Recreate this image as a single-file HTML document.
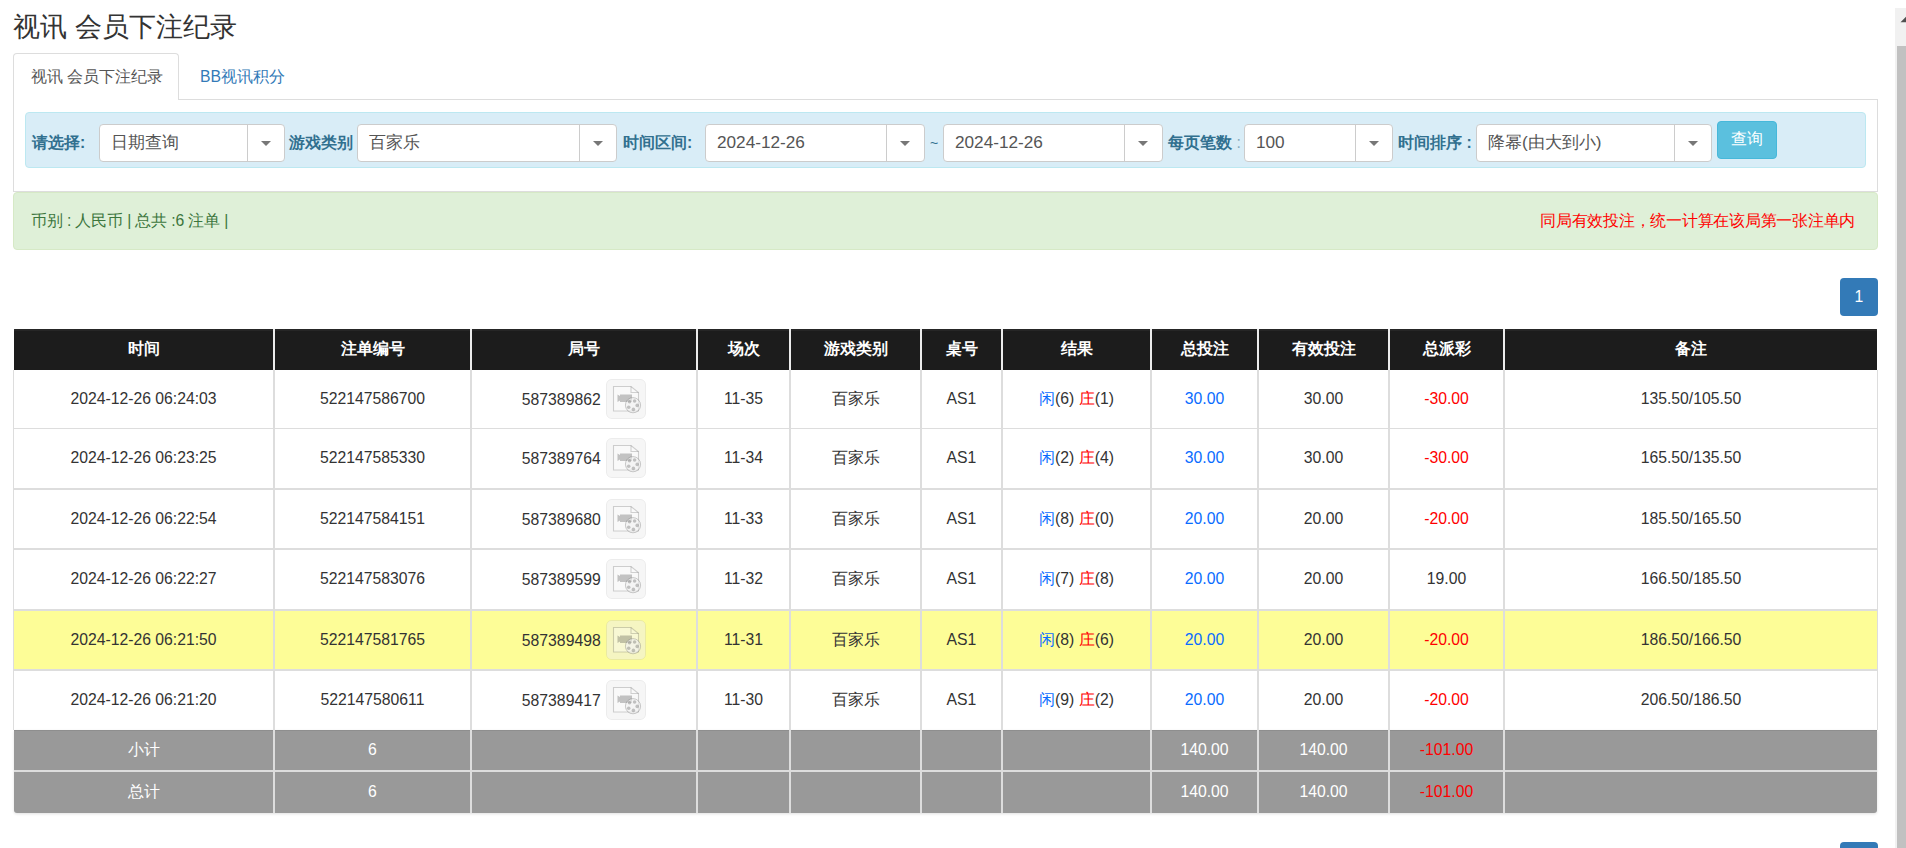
<!DOCTYPE html>
<html><head><meta charset="utf-8">
<style>
*{box-sizing:border-box}
html,body{margin:0;padding:0;background:#fff;width:1906px;height:848px;overflow:hidden;font-family:"Liberation Sans",sans-serif;color:#333;position:relative}
.abs{position:absolute}
#title{left:13px;top:7px;font-size:27px;line-height:40px;color:#333;white-space:nowrap}
#tab1{left:13px;top:53px;width:166px;height:47px;border:1px solid #ddd;border-bottom:none;border-radius:4px 4px 0 0;background:#fff;font-size:15.75px;color:#555;line-height:45px;padding-left:17px;white-space:nowrap;z-index:2}
#tab2{left:200px;top:53px;font-size:15.75px;color:#337ab7;line-height:47px;white-space:nowrap}
#tabc{left:13px;top:99px;width:1865px;height:93px;border:1px solid #ddd}
#bar{left:25px;top:112px;width:1841px;height:56px;background:#d9edf7;border:1px solid #bce8f1;border-radius:4px}
.lbl{position:absolute;top:124px;height:37px;line-height:37px;font-size:15.75px;font-weight:bold;color:#31708f;white-space:nowrap}
.sel{position:absolute;top:124px;height:38px;background:#fff;border:1px solid #ccc;border-radius:4px;font-size:17.2px;color:#555;line-height:34px;padding-left:11px;white-space:nowrap}
.sel .dv{position:absolute;top:0;bottom:0;width:1px;background:#ccc}
.sel .ct{position:absolute;top:16px;width:0;height:0;border-left:5px solid transparent;border-right:5px solid transparent;border-top:5px solid #777}
#btn{left:1717px;top:121px;width:60px;height:38px;background:#5bc0de;border:1px solid #46b8da;border-radius:4px;color:#fff;font-size:15.75px;line-height:34px;text-align:center}
#alert{left:13px;top:192px;width:1865px;height:58px;background:#dff0d8;border:1px solid #d6e9c6;border-radius:4px;font-size:15.75px;color:#3c763d}
#alert .l{position:absolute;left:17px;top:0;line-height:56px;letter-spacing:-0.15px}
#alert .r{position:absolute;right:22px;top:0;line-height:56px;color:#f00;letter-spacing:-0.25px}
.pg{width:38px;height:38px;background:#337ab7;border-radius:4px;color:#fff;font-size:15.75px;line-height:38px;text-align:center}
#tbl{position:absolute;left:13px;top:328px;border-collapse:collapse;table-layout:fixed;font-size:15.75px;color:#333}
#tbl th{background:#1b1b1b;color:#fff;font-weight:bold;height:42px;border-left:2px solid #ddd;border-right:2px solid #ddd;padding:0;text-align:center}
#tbl td{border:1px solid #ddd;border-left:2px solid #ddd;border-right:2px solid #ddd;padding:0;text-align:center;height:60px}
#tbl tr.y td{background:#ffff99}
#tbl tr.g td{background:#999;color:#fff;height:42px}
.bl{color:#1a6ae0}.rd{color:#f00}
.ic{display:inline-block;width:40px;height:40px;vertical-align:middle;margin-left:4px;border:1px solid #eee;border-radius:6px;background:#f8f8f8}
#sb{left:1895px;top:8px;width:11px;height:840px;background:#f1f1f1}
#sbt{left:1897px;top:46px;width:9px;height:802px;background:#c1c1c1}

.r{position:absolute}
.c{position:absolute;text-align:center;font-size:15.75px;color:#333;white-space:nowrap}
.c.h{color:#fff;font-weight:bold}
.c.w{color:#fff}
.c.bl,.c .bl{color:#0a6cff}
.c.rd,.c .rd{color:#f00}
.c.h{line-height:40px !important}
.c.ju .jn{vertical-align:middle}
.c.ju svg{vertical-align:middle;margin-left:5.5px;position:relative;top:-1px}
</style></head><body>
<div id="title" class="abs">视讯 会员下注纪录</div>
<div id="tabc" class="abs"></div>
<div id="tab1" class="abs">视讯 会员下注纪录</div>
<div id="tab2" class="abs">BB视讯积分</div>
<div id="bar" class="abs"></div>

<div class="lbl" style="left:32px">请选择:</div>
<div class="sel" style="left:99px;width:186px">日期查询<span class="dv" style="left:147px"></span><span class="ct" style="left:161px"></span></div>
<div class="lbl" style="left:289px">游戏类别</div>
<div class="sel" style="left:357px;width:260px">百家乐<span class="dv" style="left:221px"></span><span class="ct" style="left:235px"></span></div>
<div class="lbl" style="left:623px">时间区间:</div>
<div class="sel" style="left:705px;width:220px">2024-12-26<span class="dv" style="left:180px"></span><span class="ct" style="left:194px"></span></div>
<div class="abs" style="left:930px;top:125px;line-height:37px;font-size:14px;color:#31708f">~</div>
<div class="sel" style="left:943px;width:220px">2024-12-26<span class="dv" style="left:180px"></span><span class="ct" style="left:194px"></span></div>
<div class="lbl" style="left:1168px">每页笔数 <span style="font-weight:normal;color:#8ab">:</span></div>
<div class="sel" style="left:1244px;width:149px">100<span class="dv" style="left:110px"></span><span class="ct" style="left:124px"></span></div>
<div class="lbl" style="left:1398px">时间排序 :</div>
<div class="sel" style="left:1476px;width:236px">降幂(由大到小)<span class="dv" style="left:197px"></span><span class="ct" style="left:211px"></span></div>
<div id="btn" class="abs">查询</div>

<div id="alert" class="abs"><span class="l">币别 : 人民币 | 总共 :6 注单 |</span><span class="r">同局有效投注，统一计算在该局第一张注单内</span></div>

<div class="pg abs" style="left:1840px;top:278px">1</div>

<div id="tb">
<div class="r" style="left:14px;top:329px;width:1863px;height:41px;background:#1c1c1c;border-radius:1px 1px 0 0;box-shadow:inset 0 2px 0 #262626"></div>
<div class="r" style="left:14px;top:611px;width:1863px;height:58px;background:#fdfd97"></div>
<div class="r" style="left:14px;top:730px;width:1863px;height:83px;background:#999;border-radius:0 0 3px 3px;box-shadow:0 1px 3px rgba(0,0,0,0.12)"></div>
<div class="r" style="left:14px;top:730px;width:1863px;height:1px;background:#8e8e8e"></div>
<div class="r" style="left:14px;top:428px;width:1863px;height:1px;background:#ddd"></div>
<div class="r" style="left:14px;top:488px;width:1863px;height:2px;background:#ddd"></div>
<div class="r" style="left:14px;top:548px;width:1863px;height:2px;background:#ddd"></div>
<div class="r" style="left:14px;top:609px;width:1863px;height:2px;background:#ddd"></div>
<div class="r" style="left:14px;top:669px;width:1863px;height:2px;background:#ddd"></div>
<div class="r" style="left:14px;top:770px;width:1863px;height:2px;background:#ddd"></div>
<div class="r" style="left:13px;top:370px;width:1px;height:360px;background:#ddd"></div>
<div class="r" style="left:1877px;top:370px;width:1px;height:360px;background:#ddd"></div>
<div class="r" style="left:273px;top:329px;width:2px;height:41px;background:#ececec"></div>
<div class="r" style="left:273px;top:370px;width:2px;height:443px;background:#ddd"></div>
<div class="r" style="left:470px;top:329px;width:2px;height:41px;background:#ececec"></div>
<div class="r" style="left:470px;top:370px;width:2px;height:443px;background:#ddd"></div>
<div class="r" style="left:696px;top:329px;width:2px;height:41px;background:#ececec"></div>
<div class="r" style="left:696px;top:370px;width:2px;height:443px;background:#ddd"></div>
<div class="r" style="left:789px;top:329px;width:2px;height:41px;background:#ececec"></div>
<div class="r" style="left:789px;top:370px;width:2px;height:443px;background:#ddd"></div>
<div class="r" style="left:920px;top:329px;width:2px;height:41px;background:#ececec"></div>
<div class="r" style="left:920px;top:370px;width:2px;height:443px;background:#ddd"></div>
<div class="r" style="left:1001px;top:329px;width:2px;height:41px;background:#ececec"></div>
<div class="r" style="left:1001px;top:370px;width:2px;height:443px;background:#ddd"></div>
<div class="r" style="left:1150px;top:329px;width:2px;height:41px;background:#ececec"></div>
<div class="r" style="left:1150px;top:370px;width:2px;height:443px;background:#ddd"></div>
<div class="r" style="left:1257px;top:329px;width:2px;height:41px;background:#ececec"></div>
<div class="r" style="left:1257px;top:370px;width:2px;height:443px;background:#ddd"></div>
<div class="r" style="left:1388px;top:329px;width:2px;height:41px;background:#ececec"></div>
<div class="r" style="left:1388px;top:370px;width:2px;height:443px;background:#ddd"></div>
<div class="r" style="left:1503px;top:329px;width:2px;height:41px;background:#ececec"></div>
<div class="r" style="left:1503px;top:370px;width:2px;height:443px;background:#ddd"></div>
<div class="c h" style="left:14px;top:329px;width:259px;height:41px;line-height:41px">时间</div>
<div class="c h" style="left:275px;top:329px;width:195px;height:41px;line-height:41px">注单编号</div>
<div class="c h" style="left:472px;top:329px;width:224px;height:41px;line-height:41px">局号</div>
<div class="c h" style="left:698px;top:329px;width:91px;height:41px;line-height:41px">场次</div>
<div class="c h" style="left:791px;top:329px;width:129px;height:41px;line-height:41px">游戏类别</div>
<div class="c h" style="left:922px;top:329px;width:79px;height:41px;line-height:41px">桌号</div>
<div class="c h" style="left:1003px;top:329px;width:147px;height:41px;line-height:41px">结果</div>
<div class="c h" style="left:1152px;top:329px;width:105px;height:41px;line-height:41px">总投注</div>
<div class="c h" style="left:1259px;top:329px;width:129px;height:41px;line-height:41px">有效投注</div>
<div class="c h" style="left:1390px;top:329px;width:113px;height:41px;line-height:41px">总派彩</div>
<div class="c h" style="left:1505px;top:329px;width:372px;height:41px;line-height:41px">备注</div>
<div class="c " style="left:14px;top:370px;width:259px;height:58px;line-height:58px">2024-12-26 06:24:03</div>
<div class="c " style="left:275px;top:370px;width:195px;height:58px;line-height:58px">522147586700</div>
<div class="c ju" style="left:472px;top:370px;width:224px;height:58px;line-height:58px"><span class="jn">587389862</span><svg width="40" height="40" viewBox="0 0 40 40"><rect x="0.5" y="0.5" width="39" height="39" rx="5" fill="rgba(238,238,238,0.5)" stroke="rgba(0,0,0,0.055)"/><path d="M7.5 7.5H25L32.5 13.5V32H7.5Z" fill="rgba(255,255,255,0.3)" stroke="rgba(0,0,0,0.17)" stroke-width="1.1"/><path d="M25 7.5V13.5H32.5" fill="none" stroke="rgba(0,0,0,0.17)" stroke-width="1.1"/><path d="M11.5 15.5L14 17V15.5H26V23H14V21.5L11.5 23Z" fill="rgba(0,0,0,0.22)"/><circle cx="27" cy="26.2" r="7.6" fill="rgba(240,240,240,0.6)" stroke="rgba(0,0,0,0.19)" stroke-width="1"/><g fill="rgba(0,0,0,0.21)"><circle cx="23.5" cy="22.8" r="1.8"/><circle cx="28.6" cy="22" r="1.8"/><circle cx="31.2" cy="26.4" r="1.8"/><circle cx="27.4" cy="30.4" r="1.8"/><circle cx="22.7" cy="28.2" r="1.8"/></g></svg></div>
<div class="c " style="left:698px;top:370px;width:91px;height:58px;line-height:58px">11-35</div>
<div class="c " style="left:791px;top:370px;width:129px;height:58px;line-height:58px">百家乐</div>
<div class="c " style="left:922px;top:370px;width:79px;height:58px;line-height:58px">AS1</div>
<div class="c " style="left:1003px;top:370px;width:147px;height:58px;line-height:58px"><span class="bl">闲</span>(6) <span class="rd">庄</span>(1)</div>
<div class="c bl" style="left:1152px;top:370px;width:105px;height:58px;line-height:58px">30.00</div>
<div class="c " style="left:1259px;top:370px;width:129px;height:58px;line-height:58px">30.00</div>
<div class="c rd" style="left:1390px;top:370px;width:113px;height:58px;line-height:58px">-30.00</div>
<div class="c " style="left:1505px;top:370px;width:372px;height:58px;line-height:58px">135.50/105.50</div>
<div class="c " style="left:14px;top:429px;width:259px;height:58px;line-height:58px">2024-12-26 06:23:25</div>
<div class="c " style="left:275px;top:429px;width:195px;height:58px;line-height:58px">522147585330</div>
<div class="c ju" style="left:472px;top:429px;width:224px;height:58px;line-height:58px"><span class="jn">587389764</span><svg width="40" height="40" viewBox="0 0 40 40"><rect x="0.5" y="0.5" width="39" height="39" rx="5" fill="rgba(238,238,238,0.5)" stroke="rgba(0,0,0,0.055)"/><path d="M7.5 7.5H25L32.5 13.5V32H7.5Z" fill="rgba(255,255,255,0.3)" stroke="rgba(0,0,0,0.17)" stroke-width="1.1"/><path d="M25 7.5V13.5H32.5" fill="none" stroke="rgba(0,0,0,0.17)" stroke-width="1.1"/><path d="M11.5 15.5L14 17V15.5H26V23H14V21.5L11.5 23Z" fill="rgba(0,0,0,0.22)"/><circle cx="27" cy="26.2" r="7.6" fill="rgba(240,240,240,0.6)" stroke="rgba(0,0,0,0.19)" stroke-width="1"/><g fill="rgba(0,0,0,0.21)"><circle cx="23.5" cy="22.8" r="1.8"/><circle cx="28.6" cy="22" r="1.8"/><circle cx="31.2" cy="26.4" r="1.8"/><circle cx="27.4" cy="30.4" r="1.8"/><circle cx="22.7" cy="28.2" r="1.8"/></g></svg></div>
<div class="c " style="left:698px;top:429px;width:91px;height:58px;line-height:58px">11-34</div>
<div class="c " style="left:791px;top:429px;width:129px;height:58px;line-height:58px">百家乐</div>
<div class="c " style="left:922px;top:429px;width:79px;height:58px;line-height:58px">AS1</div>
<div class="c " style="left:1003px;top:429px;width:147px;height:58px;line-height:58px"><span class="bl">闲</span>(2) <span class="rd">庄</span>(4)</div>
<div class="c bl" style="left:1152px;top:429px;width:105px;height:58px;line-height:58px">30.00</div>
<div class="c " style="left:1259px;top:429px;width:129px;height:58px;line-height:58px">30.00</div>
<div class="c rd" style="left:1390px;top:429px;width:113px;height:58px;line-height:58px">-30.00</div>
<div class="c " style="left:1505px;top:429px;width:372px;height:58px;line-height:58px">165.50/135.50</div>
<div class="c " style="left:14px;top:490px;width:259px;height:58px;line-height:58px">2024-12-26 06:22:54</div>
<div class="c " style="left:275px;top:490px;width:195px;height:58px;line-height:58px">522147584151</div>
<div class="c ju" style="left:472px;top:490px;width:224px;height:58px;line-height:58px"><span class="jn">587389680</span><svg width="40" height="40" viewBox="0 0 40 40"><rect x="0.5" y="0.5" width="39" height="39" rx="5" fill="rgba(238,238,238,0.5)" stroke="rgba(0,0,0,0.055)"/><path d="M7.5 7.5H25L32.5 13.5V32H7.5Z" fill="rgba(255,255,255,0.3)" stroke="rgba(0,0,0,0.17)" stroke-width="1.1"/><path d="M25 7.5V13.5H32.5" fill="none" stroke="rgba(0,0,0,0.17)" stroke-width="1.1"/><path d="M11.5 15.5L14 17V15.5H26V23H14V21.5L11.5 23Z" fill="rgba(0,0,0,0.22)"/><circle cx="27" cy="26.2" r="7.6" fill="rgba(240,240,240,0.6)" stroke="rgba(0,0,0,0.19)" stroke-width="1"/><g fill="rgba(0,0,0,0.21)"><circle cx="23.5" cy="22.8" r="1.8"/><circle cx="28.6" cy="22" r="1.8"/><circle cx="31.2" cy="26.4" r="1.8"/><circle cx="27.4" cy="30.4" r="1.8"/><circle cx="22.7" cy="28.2" r="1.8"/></g></svg></div>
<div class="c " style="left:698px;top:490px;width:91px;height:58px;line-height:58px">11-33</div>
<div class="c " style="left:791px;top:490px;width:129px;height:58px;line-height:58px">百家乐</div>
<div class="c " style="left:922px;top:490px;width:79px;height:58px;line-height:58px">AS1</div>
<div class="c " style="left:1003px;top:490px;width:147px;height:58px;line-height:58px"><span class="bl">闲</span>(8) <span class="rd">庄</span>(0)</div>
<div class="c bl" style="left:1152px;top:490px;width:105px;height:58px;line-height:58px">20.00</div>
<div class="c " style="left:1259px;top:490px;width:129px;height:58px;line-height:58px">20.00</div>
<div class="c rd" style="left:1390px;top:490px;width:113px;height:58px;line-height:58px">-20.00</div>
<div class="c " style="left:1505px;top:490px;width:372px;height:58px;line-height:58px">185.50/165.50</div>
<div class="c " style="left:14px;top:550px;width:259px;height:58px;line-height:58px">2024-12-26 06:22:27</div>
<div class="c " style="left:275px;top:550px;width:195px;height:58px;line-height:58px">522147583076</div>
<div class="c ju" style="left:472px;top:550px;width:224px;height:58px;line-height:58px"><span class="jn">587389599</span><svg width="40" height="40" viewBox="0 0 40 40"><rect x="0.5" y="0.5" width="39" height="39" rx="5" fill="rgba(238,238,238,0.5)" stroke="rgba(0,0,0,0.055)"/><path d="M7.5 7.5H25L32.5 13.5V32H7.5Z" fill="rgba(255,255,255,0.3)" stroke="rgba(0,0,0,0.17)" stroke-width="1.1"/><path d="M25 7.5V13.5H32.5" fill="none" stroke="rgba(0,0,0,0.17)" stroke-width="1.1"/><path d="M11.5 15.5L14 17V15.5H26V23H14V21.5L11.5 23Z" fill="rgba(0,0,0,0.22)"/><circle cx="27" cy="26.2" r="7.6" fill="rgba(240,240,240,0.6)" stroke="rgba(0,0,0,0.19)" stroke-width="1"/><g fill="rgba(0,0,0,0.21)"><circle cx="23.5" cy="22.8" r="1.8"/><circle cx="28.6" cy="22" r="1.8"/><circle cx="31.2" cy="26.4" r="1.8"/><circle cx="27.4" cy="30.4" r="1.8"/><circle cx="22.7" cy="28.2" r="1.8"/></g></svg></div>
<div class="c " style="left:698px;top:550px;width:91px;height:58px;line-height:58px">11-32</div>
<div class="c " style="left:791px;top:550px;width:129px;height:58px;line-height:58px">百家乐</div>
<div class="c " style="left:922px;top:550px;width:79px;height:58px;line-height:58px">AS1</div>
<div class="c " style="left:1003px;top:550px;width:147px;height:58px;line-height:58px"><span class="bl">闲</span>(7) <span class="rd">庄</span>(8)</div>
<div class="c bl" style="left:1152px;top:550px;width:105px;height:58px;line-height:58px">20.00</div>
<div class="c " style="left:1259px;top:550px;width:129px;height:58px;line-height:58px">20.00</div>
<div class="c " style="left:1390px;top:550px;width:113px;height:58px;line-height:58px">19.00</div>
<div class="c " style="left:1505px;top:550px;width:372px;height:58px;line-height:58px">166.50/185.50</div>
<div class="c " style="left:14px;top:611px;width:259px;height:58px;line-height:58px">2024-12-26 06:21:50</div>
<div class="c " style="left:275px;top:611px;width:195px;height:58px;line-height:58px">522147581765</div>
<div class="c ju" style="left:472px;top:611px;width:224px;height:58px;line-height:58px"><span class="jn">587389498</span><svg width="40" height="40" viewBox="0 0 40 40"><rect x="0.5" y="0.5" width="39" height="39" rx="5" fill="rgba(238,238,238,0.5)" stroke="rgba(0,0,0,0.055)"/><path d="M7.5 7.5H25L32.5 13.5V32H7.5Z" fill="rgba(255,255,255,0.3)" stroke="rgba(0,0,0,0.17)" stroke-width="1.1"/><path d="M25 7.5V13.5H32.5" fill="none" stroke="rgba(0,0,0,0.17)" stroke-width="1.1"/><path d="M11.5 15.5L14 17V15.5H26V23H14V21.5L11.5 23Z" fill="rgba(0,0,0,0.22)"/><circle cx="27" cy="26.2" r="7.6" fill="rgba(240,240,240,0.6)" stroke="rgba(0,0,0,0.19)" stroke-width="1"/><g fill="rgba(0,0,0,0.21)"><circle cx="23.5" cy="22.8" r="1.8"/><circle cx="28.6" cy="22" r="1.8"/><circle cx="31.2" cy="26.4" r="1.8"/><circle cx="27.4" cy="30.4" r="1.8"/><circle cx="22.7" cy="28.2" r="1.8"/></g></svg></div>
<div class="c " style="left:698px;top:611px;width:91px;height:58px;line-height:58px">11-31</div>
<div class="c " style="left:791px;top:611px;width:129px;height:58px;line-height:58px">百家乐</div>
<div class="c " style="left:922px;top:611px;width:79px;height:58px;line-height:58px">AS1</div>
<div class="c " style="left:1003px;top:611px;width:147px;height:58px;line-height:58px"><span class="bl">闲</span>(8) <span class="rd">庄</span>(6)</div>
<div class="c bl" style="left:1152px;top:611px;width:105px;height:58px;line-height:58px">20.00</div>
<div class="c " style="left:1259px;top:611px;width:129px;height:58px;line-height:58px">20.00</div>
<div class="c rd" style="left:1390px;top:611px;width:113px;height:58px;line-height:58px">-20.00</div>
<div class="c " style="left:1505px;top:611px;width:372px;height:58px;line-height:58px">186.50/166.50</div>
<div class="c " style="left:14px;top:671px;width:259px;height:58px;line-height:58px">2024-12-26 06:21:20</div>
<div class="c " style="left:275px;top:671px;width:195px;height:58px;line-height:58px">522147580611</div>
<div class="c ju" style="left:472px;top:671px;width:224px;height:58px;line-height:58px"><span class="jn">587389417</span><svg width="40" height="40" viewBox="0 0 40 40"><rect x="0.5" y="0.5" width="39" height="39" rx="5" fill="rgba(238,238,238,0.5)" stroke="rgba(0,0,0,0.055)"/><path d="M7.5 7.5H25L32.5 13.5V32H7.5Z" fill="rgba(255,255,255,0.3)" stroke="rgba(0,0,0,0.17)" stroke-width="1.1"/><path d="M25 7.5V13.5H32.5" fill="none" stroke="rgba(0,0,0,0.17)" stroke-width="1.1"/><path d="M11.5 15.5L14 17V15.5H26V23H14V21.5L11.5 23Z" fill="rgba(0,0,0,0.22)"/><circle cx="27" cy="26.2" r="7.6" fill="rgba(240,240,240,0.6)" stroke="rgba(0,0,0,0.19)" stroke-width="1"/><g fill="rgba(0,0,0,0.21)"><circle cx="23.5" cy="22.8" r="1.8"/><circle cx="28.6" cy="22" r="1.8"/><circle cx="31.2" cy="26.4" r="1.8"/><circle cx="27.4" cy="30.4" r="1.8"/><circle cx="22.7" cy="28.2" r="1.8"/></g></svg></div>
<div class="c " style="left:698px;top:671px;width:91px;height:58px;line-height:58px">11-30</div>
<div class="c " style="left:791px;top:671px;width:129px;height:58px;line-height:58px">百家乐</div>
<div class="c " style="left:922px;top:671px;width:79px;height:58px;line-height:58px">AS1</div>
<div class="c " style="left:1003px;top:671px;width:147px;height:58px;line-height:58px"><span class="bl">闲</span>(9) <span class="rd">庄</span>(2)</div>
<div class="c bl" style="left:1152px;top:671px;width:105px;height:58px;line-height:58px">20.00</div>
<div class="c " style="left:1259px;top:671px;width:129px;height:58px;line-height:58px">20.00</div>
<div class="c rd" style="left:1390px;top:671px;width:113px;height:58px;line-height:58px">-20.00</div>
<div class="c " style="left:1505px;top:671px;width:372px;height:58px;line-height:58px">206.50/186.50</div>
<div class="c w" style="left:14px;top:721px;width:259px;height:58px;line-height:58px">小计</div>
<div class="c w" style="left:275px;top:721px;width:195px;height:58px;line-height:58px">6</div>
<div class="c w" style="left:1152px;top:721px;width:105px;height:58px;line-height:58px">140.00</div>
<div class="c w" style="left:1259px;top:721px;width:129px;height:58px;line-height:58px">140.00</div>
<div class="c rd" style="left:1390px;top:721px;width:113px;height:58px;line-height:58px">-101.00</div>
<div class="c w" style="left:14px;top:763px;width:259px;height:58px;line-height:58px">总计</div>
<div class="c w" style="left:275px;top:763px;width:195px;height:58px;line-height:58px">6</div>
<div class="c w" style="left:1152px;top:763px;width:105px;height:58px;line-height:58px">140.00</div>
<div class="c w" style="left:1259px;top:763px;width:129px;height:58px;line-height:58px">140.00</div>
<div class="c rd" style="left:1390px;top:763px;width:113px;height:58px;line-height:58px">-101.00</div>
</div>

<div class="pg abs" style="left:1840px;top:842px">1</div>
<div id="sb" class="abs"></div>
<div id="sbt" class="abs"></div>
<svg class="abs" style="left:1895px;top:0" width="11" height="30"><path d="M5.5 22.2L11 16.7V22.2Z" fill="#505050"/></svg>
</body></html>
